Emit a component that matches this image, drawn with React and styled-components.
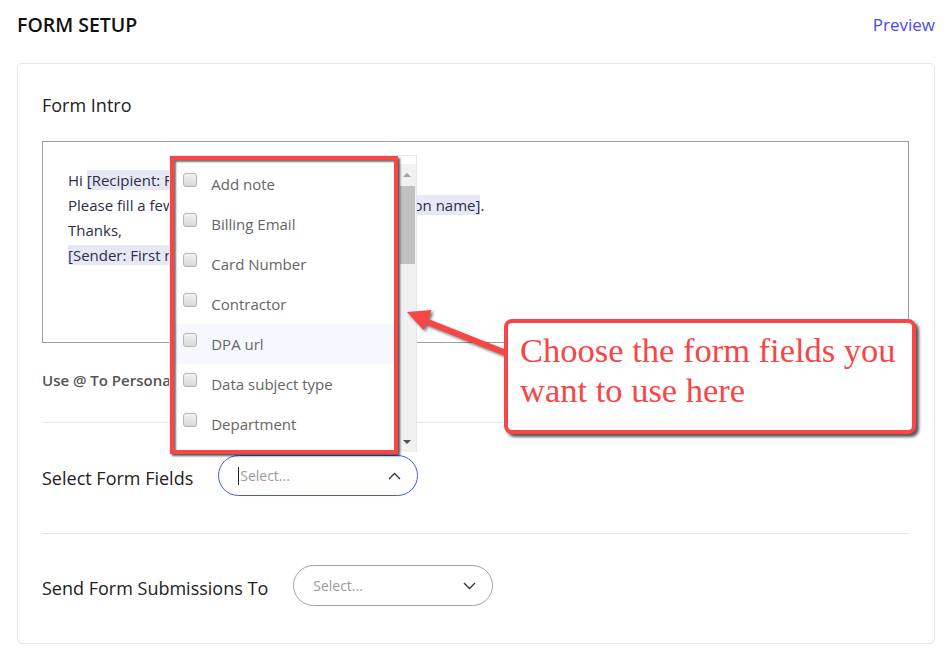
import React from 'react';
import styled, { createGlobalStyle } from 'styled-components';

const GlobalStyle = createGlobalStyle`
  body {
    margin: 0;
    background: #ffffff;
    font-family: "Open Sans", "Noto Sans", sans-serif;
    color: #222;
  }
`;

const Page = styled.div`
  padding: 0 13px 0 17px;
  width: 948px;
  box-sizing: border-box;
`;

const Header = styled.div`
  display: flex;
  justify-content: space-between;
  align-items: center;
  height: 48px;
  margin-bottom: 15px;
`;

const Title = styled.h1`
  margin: 0;
  font-size: 19.5px;
  font-weight: 600;
  color: #111;
`;

const PreviewLink = styled.a`
  font-size: 17px;
  color: #4a4aef;
  text-decoration: none;
`;

const Card = styled.div`
  position: relative;
  border: 1px solid #e4e4f2;
  border-radius: 5px;
  padding: 0 25px 0 24px;
`;

const SectionTitle = styled.div`
  margin-top: 29px;
  font-size: 18px;
  line-height: 24px;
  color: #222;
`;

const Editor = styled.div`
  margin-top: 24px;
  height: 202px;
  box-sizing: border-box;
  border: 1px solid #9e9e9e;
  padding: 26px 25px;
  font-size: 15px;
  line-height: 25px;
  color: #2d2d45;
`;

const Token = styled.span`
  background: #e6e9f5;
`;

const Hint = styled.div`
  margin-top: 28px;
  font-size: 15px;
  font-weight: 600;
  line-height: 18px;
  color: #555;
`;

const Divider = styled.div`
  height: 1px;
  background: #e5e5ef;
  margin-top: ${(p) => p.$top || 0}px;
`;

const FieldRow = styled.div`
  display: flex;
  align-items: center;
  gap: 25px;
  padding: ${(p) => p.$top}px 0 ${(p) => p.$bottom}px;
`;

const FieldLabel = styled.div`
  font-size: 18px;
  padding-top: 4px;
  color: #222;
`;

const SelectWrap = styled.div`
  position: relative;
`;

const SelectBox = styled.div`
  width: 200px;
  height: 41px;
  box-sizing: border-box;
  border: 1px solid ${(p) => (p.$focused ? '#4358ee' : '#a0a0a0')};
  border-radius: 21px;
  display: flex;
  align-items: center;
  justify-content: space-between;
  padding: 0 16px 0 ${(p) => (p.$focused ? 19 : 19)}px;
`;

const Placeholder = styled.span`
  display: flex;
  align-items: center;
  font-size: 14px;
  color: #9a9a9a;
`;

const Caret = styled.span`
  display: inline-block;
  width: 1px;
  height: 18px;
  background: #222;
  margin-right: 1px;
`;

const Menu = styled.div`
  position: absolute;
  left: -49px;
  bottom: 44px;
  width: 248px;
  height: 297px;
  box-sizing: border-box;
  padding-top: 8px;
  background: #fff;
  border: 1px solid #e2e6f0;
  border-bottom: none;
  display: flex;
`;

const ItemList = styled.div`
  flex: 1;
  overflow: hidden;
`;

const Item = styled.div`
  display: flex;
  align-items: center;
  gap: 14px;
  height: 40px;
  padding-left: 13px;
  background: ${(p) => (p.$hover ? '#f5f8fe' : 'transparent')};
  font-size: 15px;
  color: #666;
  white-space: nowrap;
`;

const Check = styled.span`
  width: 12px;
  height: 12px;
  border: 1px solid #b5b5b5;
  border-radius: 3px;
  background: linear-gradient(#f2f2f2, #d9d9d9);
  margin-bottom: 9px;
  flex-shrink: 0;
`;

const ScrollBar = styled.div`
  width: 18px;
  background: #f1f1f1;
  display: flex;
  flex-direction: column;
  align-items: center;
`;

const ScrollArrow = styled.div`
  height: ${(p) => p.$h}px;
  display: flex;
  align-items: center;
  justify-content: center;
  &::after {
    content: '';
    border-left: 4px solid transparent;
    border-right: 4px solid transparent;
    ${(p) => (p.$down ? 'border-top: 4px solid #505050;' : 'border-bottom: 4px solid #a3a3a3;')}
  }
`;

const Thumb = styled.div`
  width: 15px;
  height: 78px;
  background: #c1c1c1;
`;

const Spacer = styled.div`
  flex: 1;
`;

const RedFrame = styled.div`
  position: absolute;
  left: 0;
  top: 0;
  width: 228px;
  height: 298px;
  box-sizing: border-box;
  border: 4px solid #f84646;
  box-shadow: 2px 2px 2px rgba(0, 0, 0, 0.65), inset 2px 2px 2px rgba(0, 0, 0, 0.55);
  pointer-events: none;
`;

const Callout = styled.div`
  position: absolute;
  left: 486px;
  top: 255px;
  width: 412px;
  height: 115px;
  box-sizing: border-box;
  border: 4px solid #f84646;
  border-radius: 8px;
  background: #fff;
  box-shadow: 3px 3px 3px rgba(0, 0, 0, 0.65);
  padding: 7px 6px 0 12px;
  font-family: "Liberation Serif", serif;
  font-size: 34.5px;
  line-height: 40px;
  color: #f84646;
  white-space: nowrap;
`;

const ArrowSvg = styled.svg`
  position: absolute;
  left: 378px;
  top: 232px;
  overflow: visible;
  filter: drop-shadow(2px 2px 1.5px rgba(0, 0, 0, 0.55));
`;

const Chevron = ({ up }) => (
  <svg width="13" height="8" viewBox="0 0 13 8">
    <polyline
      points={up ? '1,7 6.5,1.5 12,7' : '1,1 6.5,6.5 12,1'}
      fill="none"
      stroke="#333"
      strokeWidth="1.3"
    />
  </svg>
);

const fields = [
  'Add note',
  'Billing Email',
  'Card Number',
  'Contractor',
  'DPA url',
  'Data subject type',
  'Department',
  'Email',
  'First name',
];

const App = () => {
  return (
    <Page>
      <GlobalStyle />
      <Header>
        <Title>FORM SETUP</Title>
        <PreviewLink href="#">Preview</PreviewLink>
      </Header>
      <Card>
        <SectionTitle>Form Intro</SectionTitle>
        <Editor>
          <div>
            Hi <Token>[Recipient: First name]</Token>,
          </div>
          <div>
            Please fill a few details for the <Token>[Sender: Organization name]</Token>.
          </div>
          <div>Thanks,</div>
          <div>
            <Token>[Sender: First name]</Token>
          </div>
        </Editor>
        <Hint>Use @ To Personalize</Hint>
        <Divider $top={33} />
        <FieldRow $top={32} $bottom={37}>
          <FieldLabel>Select Form Fields</FieldLabel>
          <SelectWrap>
            <SelectBox $focused>
              <Placeholder>
                <Caret />
                Select...
              </Placeholder>
              <Chevron up />
            </SelectBox>
            <Menu>
              <ItemList>
                {fields.map((f) => (
                  <Item key={f} $hover={f === 'DPA url'}>
                    <Check />
                    {f}
                  </Item>
                ))}
              </ItemList>
              <ScrollBar>
                <ScrollArrow $h={22} />
                <Thumb />
                <Spacer />
                <ScrollArrow $h={20} $down />
              </ScrollBar>
              <RedFrame />
            </Menu>
          </SelectWrap>
        </FieldRow>
        <Divider />
        <FieldRow $top={31} $bottom={37}>
          <FieldLabel>Send Form Submissions To</FieldLabel>
          <SelectWrap>
            <SelectBox>
              <Placeholder>Select...</Placeholder>
              <Chevron />
            </SelectBox>
          </SelectWrap>
        </FieldRow>
        <ArrowSvg width="120" height="70" viewBox="0 0 120 70">
          <line x1="110" y1="57" x2="28" y2="24.5" stroke="#f84646" strokeWidth="6" />
          <polygon points="11,16 27.5,34 35.5,14" fill="#f84646" />
        </ArrowSvg>
        <Callout>
          Choose the form fields you
          <br />
          want to use here
        </Callout>
      </Card>
    </Page>
  );
};

export default App;
